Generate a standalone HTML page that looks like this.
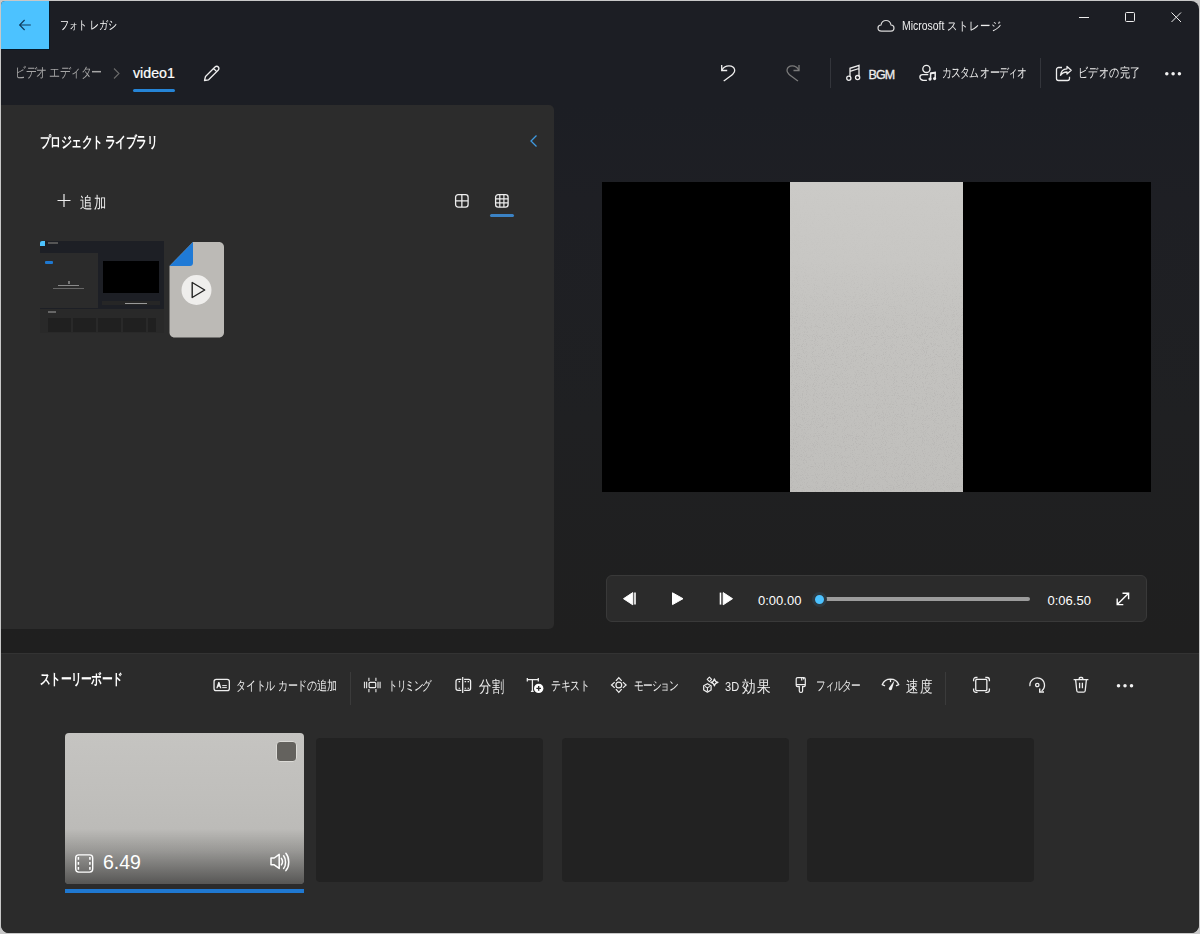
<!DOCTYPE html>
<html><head><meta charset="utf-8">
<style>
*{margin:0;padding:0;box-sizing:border-box}
html,body{width:1200px;height:934px;overflow:hidden;background:#c8c8c8;font-family:"Liberation Sans",sans-serif;color:#fff}
.abs{position:absolute}
#win{position:absolute;left:0;top:0;width:1200px;height:934px;background:linear-gradient(#1c1e24 0px,#1c1e24 104px,#1e1f24 200px,#1f2022 420px,#1f1f1f 640px);clip-path:inset(1px 1px 1px 1px round 4px 8px 8px 8px)}
#top{display:none}
#back{position:absolute;left:1px;top:1px;width:48px;height:48px;background:#4cc2ff;box-shadow:1px 1px 0 #04192a}
.t{position:absolute;white-space:nowrap;line-height:1}
#lib{position:absolute;left:0;top:105px;width:554px;height:524px;background:#2c2c2c;border-radius:0 5px 5px 0}
#sb{position:absolute;left:0;top:653px;width:1200px;height:281px;background:#2b2b2b;border-top:1px solid #333}
.tile{position:absolute;background:#222;border-radius:4px}
svg{position:absolute;overflow:visible}
</style></head><body>
<div id="win">
  <div id="top"></div>
  <div id="back">
    <svg style="left:0;top:0" width="48" height="48"><path d="M29.8 24H18.6M23.6 19l-5 5 5 5" stroke="#0f3d5e" stroke-width="1.15" fill="none"/></svg>
  </div>
  <div id="j1" class="t jp" style="left:60px;top:19px;font-size:12px">フォト レガシ</div>
  <svg style="left:876px;top:18px" width="22" height="16"><path d="M5.5 13.2C3.3 13.2 2 11.8 2 10.1 2 8.4 3.4 7 5 7 5.5 4.3 7.6 2.5 10 2.5s4.5 1.8 5 4.5c1.7 0 3 1.4 3 3.1s-1.3 3.1-3 3.1z" stroke="#d8d8d8" stroke-width="1.2" fill="none"/></svg>
  <div id="j2" class="t" style="left:902px;top:20px;font-size:12px;color:#eee">Microsoft <span class="jp" style="letter-spacing:0.6px">ストレージ</span></div>
  <svg style="left:1078px;top:10px" width="110" height="16">
    <path d="M1 7.5h10" stroke="#eee" stroke-width="1"/>
    <rect x="47.5" y="2.5" width="9" height="9" rx="1" stroke="#eee" stroke-width="1" fill="none"/>
    <path d="M93.5 2.5l9.5 9.5M103 2.5l-9.5 9.5" stroke="#eee" stroke-width="1"/>
  </svg>
  <div id="j3" class="t jp" style="left:15px;top:65px;letter-spacing:-0.55px;font-size:14px;color:#a6a6a6">ビデオ エディター</div>
  <svg style="left:110px;top:65px" width="14" height="16"><path d="M4 3.5l5 5-5 5" stroke="#6a6a6a" stroke-width="1.1" fill="none"/></svg>
  <div class="t" style="left:133px;top:66px;font-size:14.2px;-webkit-text-stroke:0.2px #fff;color:#fff">video1</div>
  <div class="abs" style="left:133px;top:89px;width:42px;height:3px;background:#2584d6;border-radius:2px"></div>
  <svg style="left:200.5px;top:64px" width="20" height="20"><path d="M3.5 16.5l1-4L14 3c1-1 2.5-1 3.3 0s.8 2.3-.2 3.3l-9.5 9.5z M12.6 4.5l2.9 2.9" stroke="#eee" stroke-width="1.3" fill="none" stroke-linejoin="round"/></svg>
  <svg style="left:716px;top:62px" width="90" height="22">
    <g transform="translate(0.7,0)"><path d="M5 3v5.5h5.5" stroke="#eee" stroke-width="1.3" fill="none"/>
    <path d="M5.2 8.2C8 2.5 17 2.6 18 8c.5 3-2.5 5-11 11" stroke="#eee" stroke-width="1.3" fill="none"/></g>
    <g transform="translate(-1,0)"><path d="M84 3v5.5h-5.5" stroke="#7a7a7a" stroke-width="1.3" fill="none"/>
    <path d="M83.8 8.2C81 2.5 73 2.6 72 8c-.5 3 2.5 5 11 11" stroke="#7a7a7a" stroke-width="1.3" fill="none"/></g>
  </svg>
  <div class="abs" style="left:830px;top:58px;width:1px;height:30px;background:#33353b"></div>
  <svg style="left:844px;top:63px" width="20" height="20">
    <path d="M6 14V5.3l9-2.8V13.8M6 8.3l9-2.8" stroke="#eee" stroke-width="1.3" fill="none"/>
    <circle cx="4.8" cy="15.2" r="2.1" stroke="#eee" stroke-width="1.3" fill="none"/>
    <circle cx="13.6" cy="14.6" r="2.1" stroke="#eee" stroke-width="1.3" fill="none"/>
  </svg>
  <div class="t" style="left:868.5px;top:69px;font-size:12.5px;letter-spacing:-0.9px;-webkit-text-stroke:0.3px #eee;color:#eee">BGM</div>
  <svg style="left:917px;top:63px" width="22" height="20">
    <circle cx="9.4" cy="5.9" r="3.6" stroke="#eee" stroke-width="1.35" fill="none"/>
    <path d="M11.3 11.6H5.6C3.9 11.6 2.9 12.6 2.9 13.9c0 1.9 2 3.5 5.5 3.5h1.5" stroke="#eee" stroke-width="1.35" fill="none"/>
    <path d="M13.6 16.2V10.2l4.6-.8v6.4" stroke="#eee" stroke-width="1.5" fill="none"/>
    <path d="M13.6 9.8l4.6-.8v1.6l-4.6.8z" fill="#eee"/>
    <circle cx="13" cy="16.1" r="1.55" fill="#eee"/><circle cx="17.6" cy="15.6" r="1.55" fill="#eee"/>
  </svg>
  <div id="j4" class="t jp" style="left:942px;top:66px;letter-spacing:-1px;font-size:13px;color:#eee">カスタム オーディオ</div>
  <div class="abs" style="left:1040px;top:58px;width:1px;height:30px;background:#33353b"></div>
  <svg style="left:1054px;top:63px" width="20" height="20">
    <path d="M8 4.5H4.5c-1 0-2 1-2 2v9c0 1 1 2 2 2h9c1 0 2-1 2-2v-1.8" stroke="#eee" stroke-width="1.3" fill="none"/>
    <path d="M13 3.5l4.2 3.8L13 11V9c-3 0-5 1-6.5 3.3C6.8 8.5 9 6 13 5.8z" stroke="#eee" stroke-width="1.3" fill="none" stroke-linejoin="round"/>
  </svg>
  <div id="j5" class="t jp" style="left:1078px;top:66px;letter-spacing:0.4px;font-size:13px;color:#eee">ビデオの完了</div>
  <svg style="left:1163px;top:70px" width="22" height="8">
    <circle cx="3.8" cy="3.7" r="1.75" fill="#f2f2f2"/><circle cx="10.1" cy="3.7" r="1.75" fill="#f2f2f2"/><circle cx="16.4" cy="3.7" r="1.75" fill="#f2f2f2"/>
  </svg>
  <div id="lib"></div>
  <div id="j6" class="t jp" style="left:40px;top:134px;letter-spacing:-0.66px;font-size:15px;font-weight:bold">プロジェクト ライブラリ</div>
  <svg style="left:526px;top:133px" width="14" height="16"><path d="M10.5 2.5L5 8l5.5 5.5" stroke="#3f9ae0" stroke-width="1.3" fill="none"/></svg>
  <svg style="left:55px;top:192px" width="18" height="18"><path d="M9 2v13M2.5 8.5h13" stroke="#eee" stroke-width="1.2"/></svg>
  <div id="j7" class="t jp" style="left:80px;top:194.5px;letter-spacing:1.5px;font-size:16px;color:#eee">追加</div>
  <svg style="left:453px;top:192px" width="60" height="18">
    <rect x="2.6" y="2.6" width="12.5" height="12.5" rx="2.6" stroke="#eee" stroke-width="1.3" fill="none"/>
    <path d="M8.85 2.6v12.5M2.6 8.85h12.5" stroke="#eee" stroke-width="1.3"/>
    <rect x="42.6" y="2.6" width="12.5" height="12.5" rx="2.6" stroke="#eee" stroke-width="1.3" fill="none"/>
    <path d="M46.8 2.6v12.5M50.9 2.6v12.5M42.6 6.8h12.5M42.6 10.9h12.5" stroke="#eee" stroke-width="1.2"/>
  </svg>
  <div class="abs" style="left:490px;top:214px;width:24px;height:3px;background:#3b82c4;border-radius:2px"></div>
  <!-- mini screenshot thumb -->
  <div class="abs" style="left:40px;top:241px;width:124px;height:92px;background:#1d1f25;overflow:hidden">
    <div class="abs" style="left:0;top:0;width:5px;height:5px;background:#4cc2ff;border-radius:2px 0 0 0"></div>
    <div class="abs" style="left:8px;top:1px;width:10px;height:2px;background:#555"></div>
    <div class="abs" style="left:0;top:12px;width:58px;height:55px;background:#2b2b2b"></div>
    <div class="abs" style="left:5px;top:19.5px;width:8px;height:3.5px;background:#1e78d0;border-radius:1px"></div>
    <div class="abs" style="left:18px;top:43.5px;width:21px;height:1.5px;background:#8a8a8a"></div><div class="abs" style="left:13px;top:47px;width:31px;height:1px;background:#666"></div><div class="abs" style="left:28px;top:40px;width:2px;height:3px;background:#777"></div>
    <div class="abs" style="left:63px;top:20px;width:56px;height:32px;background:#000"></div>
    <div class="abs" style="left:62px;top:60px;width:58px;height:4px;background:#262626"></div>
    <div class="abs" style="left:84.5px;top:61.5px;width:22.5px;height:1px;background:#999"></div>
    <div class="abs" style="left:0;top:68px;width:124px;height:24px;background:#292929"></div>
    <div class="abs" style="left:8px;top:70px;width:8px;height:2px;background:#666"></div>
    <div class="abs" style="left:8px;top:77px;width:23px;height:14px;background:#202020"></div>
    <div class="abs" style="left:33px;top:77px;width:23px;height:14px;background:#202020"></div>
    <div class="abs" style="left:58px;top:77px;width:23px;height:14px;background:#202020"></div>
    <div class="abs" style="left:83px;top:77px;width:23px;height:14px;background:#202020"></div>
    <div class="abs" style="left:108px;top:77px;width:8px;height:14px;background:#202020"></div>
  </div>
  <!-- file thumb -->
  <svg style="left:168px;top:240px" width="60" height="100">
    <path d="M25 2H51c2.8 0 5 2.2 5 5V92.5c0 2.8-2.2 5-5 5H6.5c-2.8 0-5-2.2-5-5V26z" fill="#bcbab6"/>
    <path d="M1.5 26L25 2V23c0 1.7-1.3 3-3 3z" fill="#1f7ad6"/>
    <circle cx="28.5" cy="50" r="15" fill="#efeeec"/>
    <path d="M24.2 42.5v15l12.5-7.5z" stroke="#222" stroke-width="1.4" fill="none" stroke-linejoin="round"/>
  </svg>

  <!-- preview -->
  <div class="abs" style="left:602px;top:182px;width:549px;height:310px;background:#000"></div>
  <div class="abs" style="left:790px;top:182px;width:173px;height:310px;background:linear-gradient(#cbcac7 0%,#c8c7c4 25%,#c4c3c0 45%,#c0bfbc 100%)"></div>
  <svg style="left:790px;top:182px" width="173" height="310">
    <defs>
      <filter id="spk" x="0" y="0" width="100%" height="100%">
        <feTurbulence type="fractalNoise" baseFrequency="1.1" numOctaves="2" seed="3"/>
        <feColorMatrix type="matrix" values="0 0 0 0 0.45  0 0 0 0 0.44  0 0 0 0 0.43  -4 0 0 0 1.9"/>
      </filter>
      <linearGradient id="spkg" x1="0" y1="0" x2="0" y2="1"><stop offset="0" stop-color="#fff" stop-opacity="0"/><stop offset="0.22" stop-color="#fff" stop-opacity="0.1"/><stop offset="0.5" stop-color="#fff" stop-opacity="0.9"/><stop offset="1" stop-color="#fff" stop-opacity="1"/></linearGradient>
      <mask id="spkm"><rect width="173" height="310" fill="url(#spkg)"/></mask>
    </defs>
    <rect width="173" height="310" filter="url(#spk)" mask="url(#spkm)" opacity="0.6"/>
  </svg>

  <!-- control bar -->
  <div class="abs" style="left:606px;top:575px;width:541px;height:47px;background:#2b2b2b;border:1px solid #393939;border-radius:6px"></div>
  <svg style="left:620px;top:590px" width="120" height="18">
    <path d="M12.8 2.6L3.5 8.7l9.3 6.1z" fill="#fff" stroke="#fff" stroke-width="1" stroke-linejoin="round"/>
    <path d="M15 2.6v12" stroke="#fff" stroke-width="1.6"/>
    <path d="M52.5 2.8v11.8l10.5-5.9z" fill="#fff" stroke="#fff" stroke-width="1" stroke-linejoin="round"/>
    <path d="M100.5 2.6v12" stroke="#fff" stroke-width="1.6"/>
    <path d="M103.2 2.6l9.3 6.1-9.3 6.1z" fill="#fff" stroke="#fff" stroke-width="1" stroke-linejoin="round"/>
  </svg>
  <div class="t" style="left:758px;top:594px;font-size:13px;color:#fff">0:00.00</div>
  <div class="abs" style="left:822px;top:597px;width:208px;height:4px;background:#9c9c9c;border-radius:2px"></div>
  <div class="abs" style="left:812px;top:592px;width:15px;height:15px;background:#4cc2ff;border:3px solid #2d3a42;border-radius:50%"></div>
  <div class="t" style="left:1047.5px;top:594px;font-size:13px;color:#fff">0:06.50</div>
  <svg style="left:1114px;top:590px" width="20" height="18">
    <path d="M3.2 14.6L14.6 3.2M8.5 3.2h6.1v6.1M3.2 8.6v6h6.1" stroke="#fff" stroke-width="1.4" fill="none"/>
  </svg>

  <!-- storyboard -->
  <div id="sb"></div>
  <div id="j8" class="t jp" style="left:40px;top:671px;letter-spacing:-0.73px;font-size:15px;font-weight:bold">ストーリーボード</div>
  <svg style="left:210px;top:676px" width="22" height="18">
    <rect x="4.05" y="3.3" width="15.3" height="11.3" rx="2.2" stroke="#eee" stroke-width="1.3" fill="none"/>
    <path d="M6.2 12.3L8.3 6h1.1l2.1 6.3h-1.4l-.5-1.6H8.1l-.5 1.6z" fill="#eee"/>
    <path d="M12.2 9.6h4.6M12.2 11.6h4.6" stroke="#eee" stroke-width="1"/>
  </svg>
  <div id="j9" class="t jp" style="left:236px;top:679px;letter-spacing:-0.3px;font-size:13px;color:#eee">タイトル カードの追加</div>
  <div class="abs" style="left:350px;top:672px;width:1px;height:33px;background:#3b3b3b"></div>
  <svg style="left:361px;top:676px" width="22" height="18">
    <rect x="8.1" y="6.3" width="6.6" height="5.4" rx="1" stroke="#eee" stroke-width="1.2" fill="none"/>
    <path d="M3.5 5.7v6.5M5.6 5.7v6.5M17 5.7v6.5M19.1 5.7v6.5M7.9 1.8v3.2M14.9 1.8v3.2M7.9 13v3.2M14.9 13v3.2" stroke="#ddd" stroke-width="1.2"/>
  </svg>
  <div id="j10" class="t jp" style="left:388px;top:679px;letter-spacing:-1.5px;font-size:13px;color:#eee">トリミング</div>
  <svg style="left:453px;top:676px" width="22" height="18">
    <path d="M8.3 3.4H5c-1.2 0-2 .8-2 2v6.9c0 1.2.8 2 2 2h3.3M11.1 3.4h4.5c1.2 0 2 .8 2 2v6.9c0 1.2-.8 2-2 2h-4.5M9.7 1v16" stroke="#eee" stroke-width="1.25" fill="none"/>
    <path d="M5.6 5.6h1.5M11.6 5.6h1.5M14.6 5.6h1.5M5.6 12.2h1.5M11.6 12.2h1.5M14.6 12.2h1.5" stroke="#eee" stroke-width="1.1"/>
  </svg>
  <div id="j11" class="t jp" style="left:479px;top:679px;letter-spacing:1px;font-size:16px;color:#eee">分割</div>
  <svg style="left:525px;top:675px" width="22" height="20">
    <path d="M2.3 4.7H13.3M2.3 3v3.4M13.3 3v3.4M7.4 4.7v11.6M5.9 16.3h2.8" stroke="#eee" stroke-width="1.25" fill="none"/>
    <circle cx="13.7" cy="13.4" r="4.7" fill="#fff"/>
    <path d="M13.7 11.1v4.6M11.4 13.4h4.6" stroke="#2b2b2b" stroke-width="1.3"/>
  </svg>
  <div id="j12" class="t jp" style="left:550.5px;top:679px;letter-spacing:-0.33px;font-size:13px;color:#eee">テキスト</div>
  <svg style="left:609px;top:676px" width="20" height="20">
    <circle cx="9.8" cy="9" r="2.9" stroke="#eee" stroke-width="1.2" fill="none"/>
    <path d="M6.9 4.9l2.9-3.2 2.9 3.2M6.9 13.1l2.9 3.2 2.9-3.2M5.7 6.1L2.5 9l3.2 2.9M13.9 6.1L17.1 9l-3.2 2.9" stroke="#eee" stroke-width="1.25" fill="none"/>
  </svg>
  <div id="j13" class="t jp" style="left:634.0px;top:679px;letter-spacing:-1.25px;font-size:13px;color:#eee">モーション</div>
  <svg style="left:700px;top:675px" width="20" height="20">
    <path d="M7.4 8.7l3.7 2.1v4.2l-3.7 2.1-3.7-2.1v-4.2z" stroke="#eee" stroke-width="1.25" fill="none" stroke-linejoin="round"/>
    <path d="M7.4 12.9v3.2M7.4 12.9l-2.4-1.5M7.4 12.9l2.4-1.5" stroke="#eee" stroke-width="1.1" fill="none"/>
    <path d="M9.4 2.2l2.2 2.2-2.2 2.2-2.2-2.2z" stroke="#eee" stroke-width="1.1" fill="none" stroke-linejoin="round"/>
    <path d="M14.4 3.8Q14.9 6.9 18 7.4 14.9 7.9 14.4 11 13.9 7.9 10.8 7.4 13.9 6.9 14.4 3.8z" stroke="#eee" stroke-width="1.2" fill="none" stroke-linejoin="round"/>
  </svg>
  <div id="j14" class="t" style="left:725px;top:679px;font-size:13px;color:#eee">3D <span class="jp" style="letter-spacing:1px;font-size:16px;vertical-align:-1px">効果</span></div>
  <svg style="left:792px;top:675px" width="16" height="20">
    <path d="M5.6 2.6h6.3c.8 0 1.4.6 1.4 1.4v6.3c0 .8-.6 1.3-1.4 1.3h-1.3v4.3c0 .9-.6 1.5-1.5 1.5h-.3c-.9 0-1.5-.6-1.5-1.5v-4.3H5.6c-.8 0-1.4-.5-1.4-1.3V4c0-.8.6-1.4 1.4-1.4zM4.4 9.7h8.8M9.7 3v2.6M11.6 3v1.6" stroke="#eee" stroke-width="1.2" fill="none"/>
  </svg>
  <div id="j15" class="t jp" style="left:815.5px;top:679px;letter-spacing:-1.25px;font-size:13px;color:#eee">フィルター</div>
  <svg style="left:880px;top:676px" width="22" height="18">
    <path d="M2.2 8.7A9 9 0 0 1 18.8 8.7M2.2 8.7l2.3 1M18.8 8.7l-2.3 1M10.5 3.1v2.4" stroke="#eee" stroke-width="1.3" fill="none" stroke-linecap="round"/>
    <path d="M8.9 12L14.6 4.2 12 12.9c-.4 1.2-1.5 1.5-2.3 1.1-.8-.4-1.1-1.2-.8-2z" fill="#eee"/>
  </svg>
  <div id="j16" class="t jp" style="left:905.5px;top:679px;letter-spacing:2px;font-size:16px;color:#eee">速度</div>
  <div class="abs" style="left:945px;top:672px;width:1px;height:33px;background:#3b3b3b"></div>
  <svg style="left:970px;top:675px" width="22" height="20">
    <rect x="5.75" y="4.45" width="11.1" height="11.1" rx="1" stroke="#eee" stroke-width="1.3" fill="none"/>
    <path d="M3.6 6.3V4.8c0-1.3 1-2.3 2.3-2.3h1.6M15.3 2.5h1.8c1.3 0 2.3 1 2.3 2.3v1.5M19.4 13.6v1.4c0 1.3-1 2.3-2.3 2.3h-1.8M7.5 17.3H5.9c-1.3 0-2.3-1-2.3-2.3v-1.4" stroke="#eee" stroke-width="1.3" fill="none"/>
  </svg>
  <svg style="left:1027px;top:675px" width="22" height="20">
    <path d="M2.9 10.6A7.3 7.3 0 1 1 15.1 15.6" stroke="#eee" stroke-width="1.3" fill="none" stroke-linecap="round"/>
    <circle cx="10.3" cy="10" r="1.7" stroke="#eee" stroke-width="1.3" fill="none"/>
    <path d="M12.7 13.4V17h4.3" stroke="#eee" stroke-width="1.4" fill="none" stroke-linejoin="miter"/>
  </svg>
  <svg style="left:1071px;top:675px" width="22" height="20">
    <path d="M2.6 4.6h14.8M8.2 4.6V3.5c0-.6.5-1 1-1h1.6c.6 0 1 .4 1 1v1.1M4.6 4.6l1.2 11.1c.1 1 .8 1.5 1.7 1.5h5c.9 0 1.6-.5 1.7-1.5L15.4 4.6M8.6 7.8v5.4M11.4 7.8v5.4" stroke="#eee" stroke-width="1.3" fill="none"/>
  </svg>
  <svg style="left:1115px;top:682px" width="22" height="8">
    <circle cx="3.5" cy="3.8" r="1.75" fill="#f2f2f2"/><circle cx="10" cy="3.8" r="1.75" fill="#f2f2f2"/><circle cx="16.5" cy="3.8" r="1.75" fill="#f2f2f2"/>
  </svg>

  <!-- tiles -->
  <div class="abs" style="left:65px;top:733px;width:239px;height:151px;border-radius:4px;overflow:hidden;background:linear-gradient(#c5c4c1 0%,#c0bfbc 40%,#bbbab7 70%,#b5b4b1 100%)">
    <div class="abs" style="left:0;top:96px;width:239px;height:55px;background:linear-gradient(rgba(0,0,0,0),rgba(0,0,0,.18) 40%,rgba(0,0,0,.52))"></div>
    <div class="abs" style="left:211px;top:8px;width:20.5px;height:21px;background:#64625e;border:1.2px solid #dcdbd7;border-radius:4px"></div>
  </div>
  <svg style="left:72px;top:852px" width="24" height="24">
    <rect x="3.7" y="2.9" width="17" height="17.2" rx="3" stroke="#fff" stroke-width="1.4" fill="none"/>
    <path d="M6.4 5v2.8M6.4 10v2.8M6.4 15v2.8M17.9 5v2.8M17.9 10v2.8M17.9 15v2.8" stroke="#fff" stroke-width="1.5"/>
  </svg>
  <div class="t" style="left:103px;top:853px;font-size:19.5px;color:#fff">6.49</div>
  <svg style="left:268px;top:851px" width="26" height="22">
    <path d="M3 7h3.2l5-3.6v14l-5-3.6H3z" stroke="#fff" stroke-width="1.5" fill="none" stroke-linejoin="round"/>
    <path d="M13.4 7.3c1.2 1.8 1.2 4.8 0 6.6M15.6 4.8c2.6 3.2 2.6 9.6 0 12.6M17.9 2.2c3.8 4.5 3.8 13 0 17.4" stroke="#fff" stroke-width="1.5" fill="none" stroke-linecap="round"/>
  </svg>
  <div class="abs" style="left:65px;top:889px;width:239px;height:4px;background:#1f78d1"></div>
  <div class="tile" style="left:316px;top:738px;width:227px;height:144px"></div>
  <div class="tile" style="left:562px;top:738px;width:227px;height:144px"></div>
  <div class="tile" style="left:807px;top:738px;width:227px;height:144px"></div>
</div>
<script>
(function(){var W={"j1":57,"j2":100,"j3":87.06,"j4":84,"j5":62.41,"j6":117.09,"j7":27,"j8":82.17,"j9":100.7,"j10":42.5,"j11":26,"j12":38.69,"j13":43.75,"j14":46,"j15":43.75,"j16":28};
for(var k in W){var e=document.getElementById(k);if(!e)continue;var w=e.getBoundingClientRect().width;if(w>W[k]*1.06||w<W[k]*0.94){e.style.transformOrigin="0 50%";e.style.transform="scaleX("+(W[k]/w)+")";}}})();
</script>
</body></html>
